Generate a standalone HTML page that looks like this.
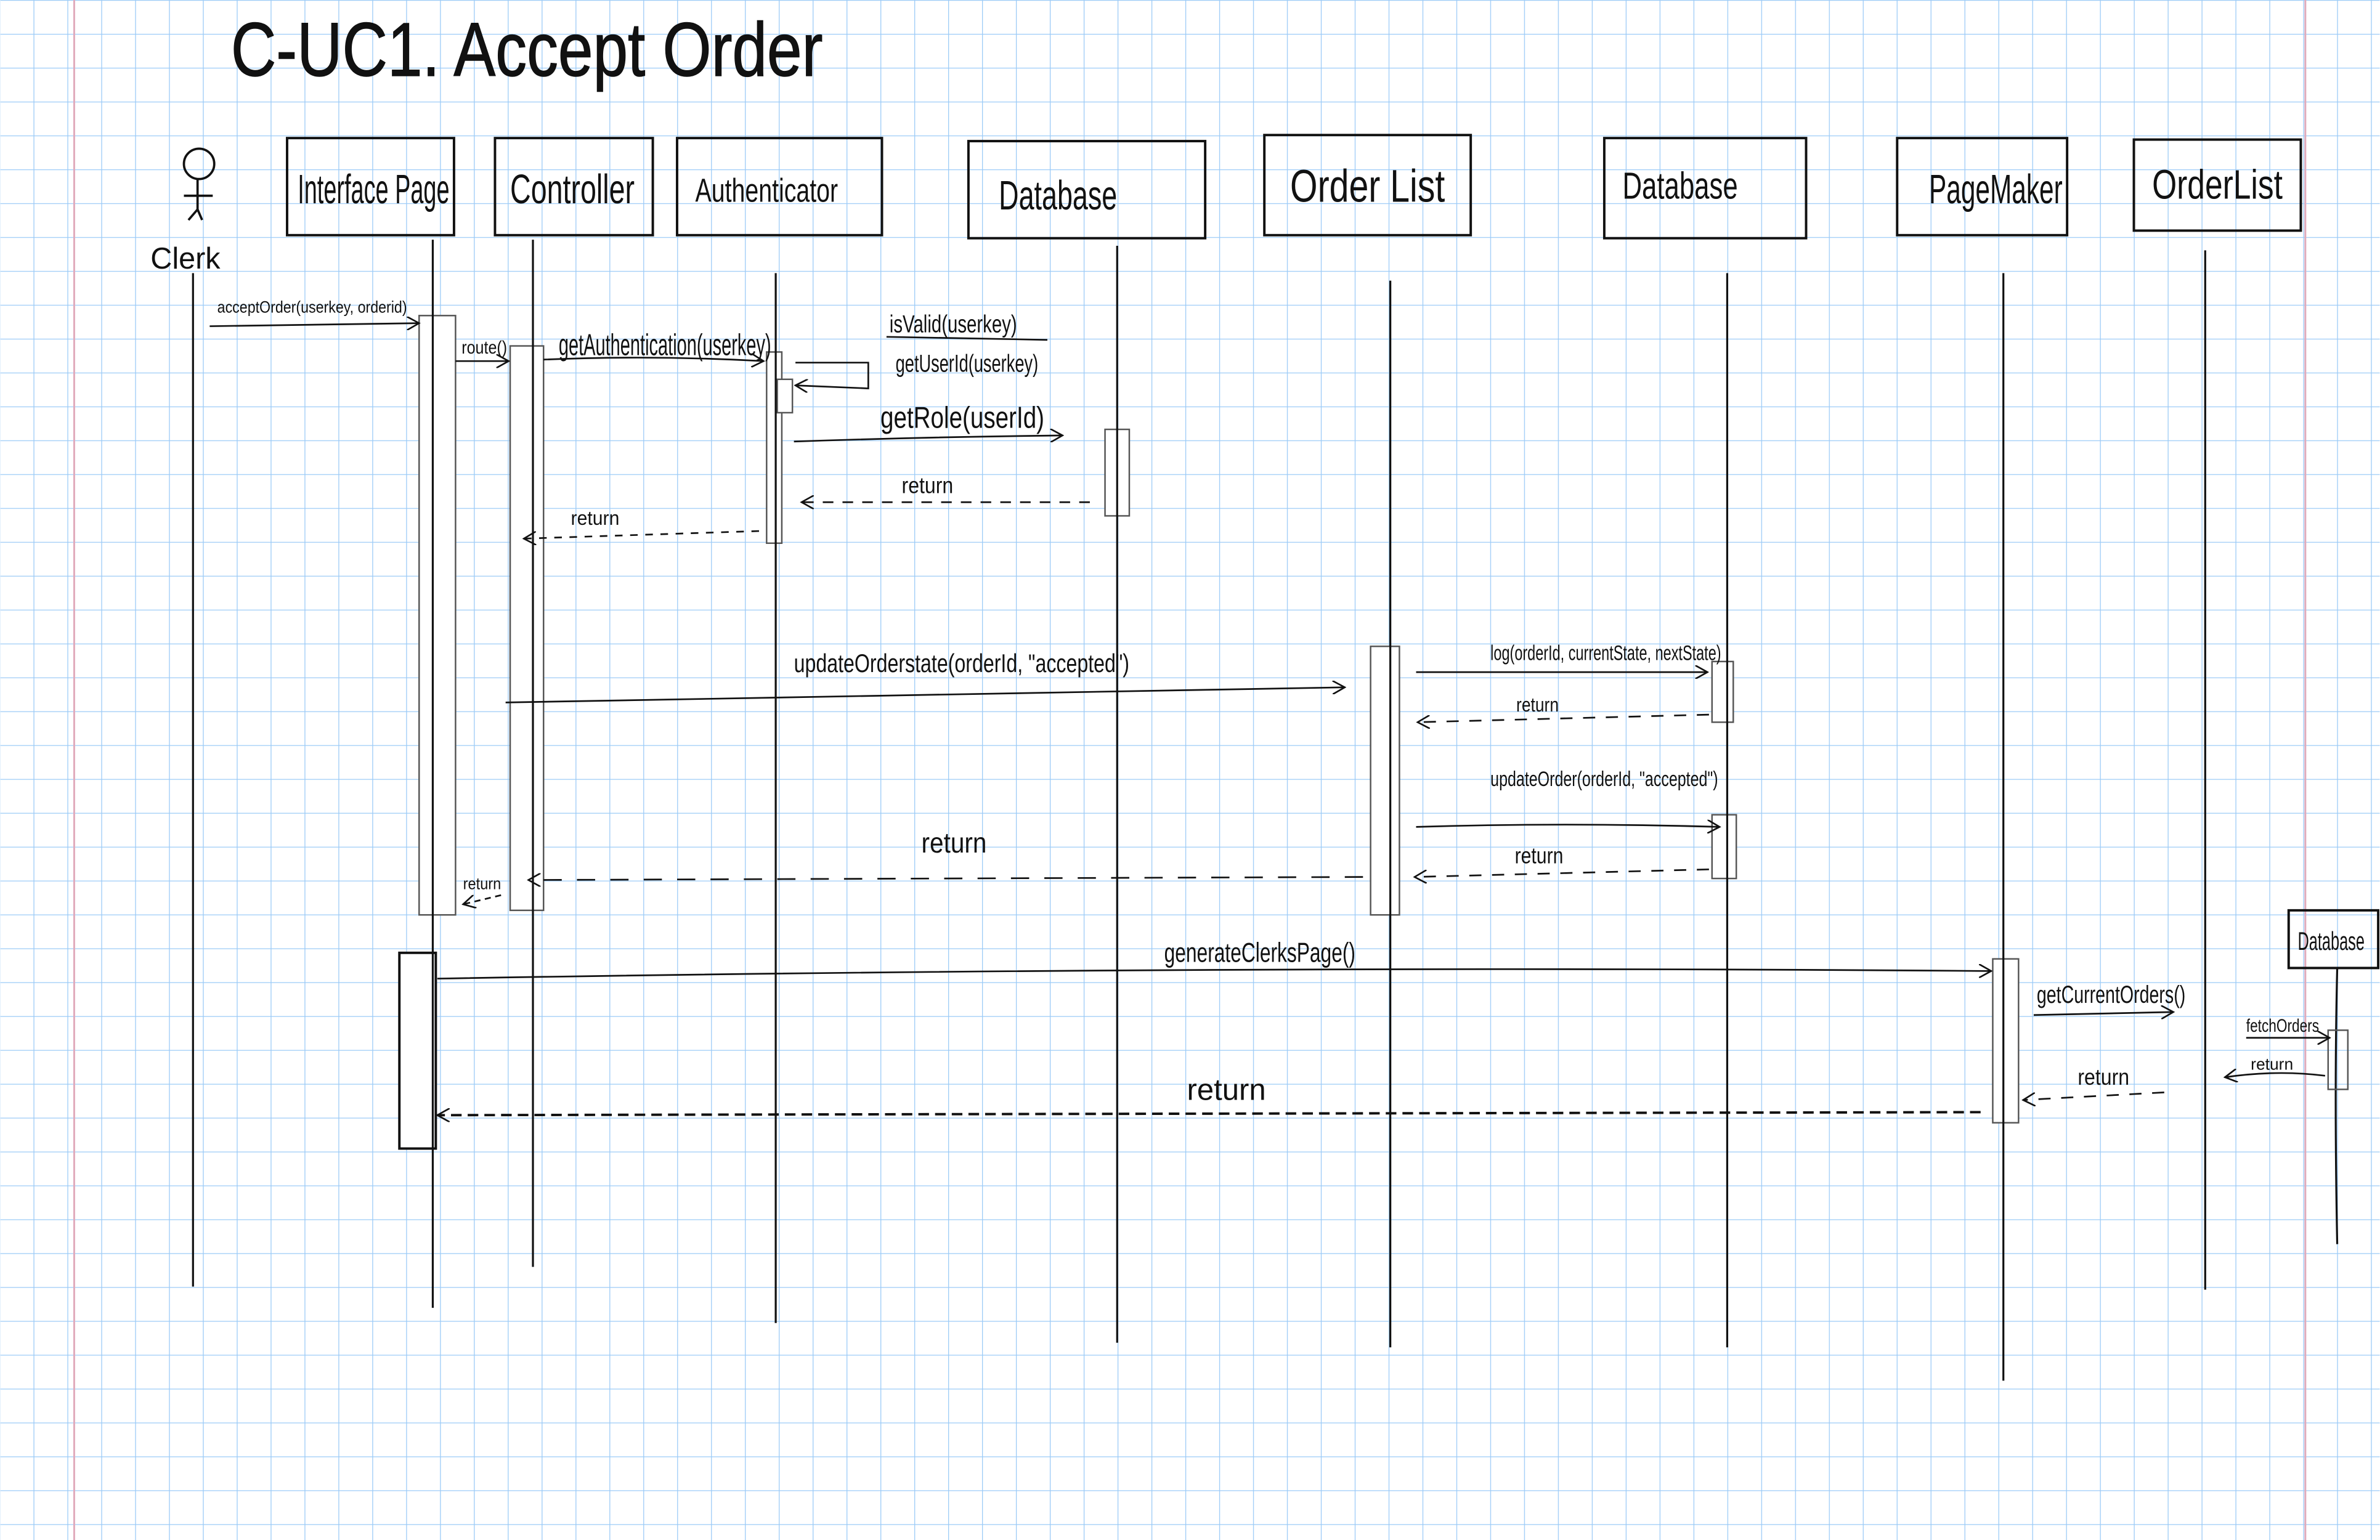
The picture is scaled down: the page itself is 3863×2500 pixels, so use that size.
<!DOCTYPE html>
<html><head><meta charset="utf-8"><style>
html,body{margin:0;padding:0;background:#fff;}
svg{display:block;}
text{font-family:"Liberation Sans Narrow","Liberation Sans",sans-serif;fill:#111;}
</style></head><body>
<svg width="3863" height="2500" viewBox="0 0 1568 1015" xmlns="http://www.w3.org/2000/svg">
<defs>
<pattern id="g" x="21.9" y="22.3" width="22.324" height="22.324" patternUnits="userSpaceOnUse">
<path d="M0 0H22.324M0 0V22.324" stroke="#9ccbf7" stroke-width="1.05" fill="none"/>
</pattern>
<marker id="a" viewBox="0 0 10 10" refX="9" refY="5" markerWidth="9" markerHeight="9" markerUnits="userSpaceOnUse" orient="auto"><path d="M0 0L9 5L0 10" fill="none" stroke="#111" stroke-width="1.2"/></marker>
</defs>
<rect width="1568" height="1015" fill="#fff"/>
<rect width="1568" height="1015" fill="url(#g)"/>
<line x1="48.7" y1="0" x2="48.7" y2="1015" stroke="#e0aabb" stroke-width="1.2"/>
<line x1="1519" y1="0" x2="1519" y2="1015" stroke="#e0aabb" stroke-width="1.2"/>

<text x="152" y="50" font-size="50" textLength="390" lengthAdjust="spacingAndGlyphs" stroke="#111" stroke-width="0.6">C-UC1. Accept Order</text>

<!-- actor -->
<g fill="none" stroke="#111" stroke-width="1.5">
<circle cx="131" cy="108" r="10"/>
<line x1="130" y1="118" x2="130" y2="138"/>
<line x1="121" y1="129" x2="140" y2="129"/>
<path d="M130 138L124 145M130 138L133 145"/>
</g>
<text x="99" y="177" font-size="20" textLength="46" lengthAdjust="spacingAndGlyphs">Clerk</text>

<!-- boxes -->
<g fill="none" stroke="#111" stroke-width="1.6">
<rect x="189" y="91" width="110" height="64"/>
<rect x="326" y="91" width="104" height="64"/>
<rect x="446" y="91" width="135" height="64"/>
<rect x="638" y="93" width="156" height="64"/>
<rect x="833" y="89" width="136" height="66"/>
<rect x="1057" y="91" width="133" height="66"/>
<rect x="1250" y="91" width="112" height="64"/>
<rect x="1406" y="92" width="110" height="60"/>
<rect x="1508" y="600" width="59" height="38"/>
</g>
<g font-size="27">
<text x="196" y="134" textLength="100" lengthAdjust="spacingAndGlyphs">Interface Page</text>
<text x="336" y="134" textLength="82" lengthAdjust="spacingAndGlyphs">Controller</text>
<text x="458" y="133" font-size="22" textLength="94" lengthAdjust="spacingAndGlyphs">Authenticator</text>
<text x="658" y="138" textLength="78" lengthAdjust="spacingAndGlyphs">Database</text>
<text x="850" y="133" font-size="30" textLength="102" lengthAdjust="spacingAndGlyphs">Order List</text>
<text x="1069" y="131" font-size="25" textLength="76" lengthAdjust="spacingAndGlyphs">Database</text>
<text x="1271" y="134" textLength="88" lengthAdjust="spacingAndGlyphs">PageMaker</text>
<text x="1418" y="131" textLength="86" lengthAdjust="spacingAndGlyphs">OrderList</text>
<text x="1514" y="626" font-size="17" textLength="44" lengthAdjust="spacingAndGlyphs">Database</text>
</g>

<!-- lifelines -->
<g stroke="#111" stroke-width="1.3">
<line x1="127" y1="180" x2="127" y2="848"/>
<line x1="1453" y1="165" x2="1453" y2="850"/>
<path d="M1540 638 Q1538 720 1540 820" fill="none"/>
</g>

<!-- activations -->
<g fill="#fff" stroke="#555" stroke-width="1">
<rect x="276" y="208" width="24" height="395"/>
<rect x="336" y="228" width="22" height="372"/>
<rect x="505" y="232" width="10" height="126"/>
<rect x="512" y="250" width="10" height="22"/>
<rect x="728" y="283" width="16" height="57"/>
<rect x="903" y="426" width="19" height="177"/>
<rect x="1128" y="436" width="14" height="40"/>
<rect x="1128" y="537" width="16" height="42"/>
<rect x="1313" y="632" width="17" height="108"/>
<rect x="1534" y="679" width="13" height="39" fill-opacity="0"/>
</g>
<rect x="263" y="628" width="24" height="129" fill="#fff" stroke="#111" stroke-width="1.6"/>
<g stroke="#111" stroke-width="1.3">
<line x1="285" y1="158" x2="285" y2="862"/>
<line x1="351" y1="158" x2="351" y2="835"/>
<line x1="511" y1="180" x2="511" y2="872"/>
<line x1="736" y1="162" x2="736" y2="885"/>
<line x1="916" y1="185" x2="916" y2="888"/>
<line x1="1138" y1="180" x2="1138" y2="888"/>
<line x1="1320" y1="180" x2="1320" y2="910"/>
</g>

<!-- messages -->
<g fill="none" stroke="#111" stroke-width="1.1" marker-end="url(#a)">
<path d="M138 215 L276 213"/>
<path d="M300 238 L335 238"/>
<path d="M358 237 Q430 234 503 238"/>
<path d="M524 239 L572 239 L572 256 L524 254"/>
<path d="M523 291 Q610 288 700 287"/>
<path d="M718 331 L528 331" stroke-dasharray="7 6"/>
<path d="M500 350 L345 355" stroke-dasharray="5 5"/>
<path d="M333 463 Q600 458 886 453"/>
<path d="M933 443 L1125 443"/>
<path d="M1126 471 L934 476" stroke-dasharray="8 7"/>
<path d="M933 545 Q1030 542 1133 545"/>
<path d="M1126 573 L932 578" stroke-dasharray="8 7"/>
<path d="M898 578 L348 580" stroke-dasharray="12 10"/>
<path d="M330 590 L305 596" stroke-dasharray="4 3"/>
<path d="M288 645 Q800 636 1312 640"/>
<path d="M1340 669 L1432 667"/>
<path d="M1426 720 L1333 725" stroke-dasharray="8 7"/>
<path d="M1480 684 L1535 684"/>
<path d="M1532 709 Q1500 705 1466 710"/>
<path d="M1305 733 L288 735" stroke-dasharray="7 4" stroke-width="1.6"/>
</g>
<line x1="584" y1="222" x2="690" y2="224" stroke="#111" stroke-width="1.1"/>

<!-- labels -->
<g font-size="13">
<text x="143" y="206" font-size="11" textLength="125" lengthAdjust="spacingAndGlyphs">acceptOrder(userkey, orderid)</text>
<text x="304" y="233" font-size="12" textLength="30" lengthAdjust="spacingAndGlyphs">route()</text>
<text x="368" y="234" font-size="20" textLength="140" lengthAdjust="spacingAndGlyphs">getAuthentication(userkey)</text>
<text x="586" y="219" font-size="16" textLength="84" lengthAdjust="spacingAndGlyphs">isValid(userkey)</text>
<text x="590" y="245" font-size="16" textLength="94" lengthAdjust="spacingAndGlyphs">getUserId(userkey)</text>
<text x="580" y="282" font-size="20" textLength="108" lengthAdjust="spacingAndGlyphs">getRole(userId)</text>
<text x="594" y="325" font-size="15" textLength="34" lengthAdjust="spacingAndGlyphs">return</text>
<text x="376" y="346" font-size="13" textLength="32" lengthAdjust="spacingAndGlyphs">return</text>
<text x="523" y="443" font-size="17" textLength="221" lengthAdjust="spacingAndGlyphs">updateOrderstate(orderId, "accepted")</text>
<text x="982" y="435" font-size="14" textLength="152" lengthAdjust="spacingAndGlyphs">log(orderId, currentState, nextState)</text>
<text x="999" y="469" font-size="13" textLength="28" lengthAdjust="spacingAndGlyphs">return</text>
<text x="982" y="518" font-size="14" textLength="150" lengthAdjust="spacingAndGlyphs">updateOrder(orderId, "accepted")</text>
<text x="998" y="569" font-size="15" textLength="32" lengthAdjust="spacingAndGlyphs">return</text>
<text x="607" y="562" font-size="19" textLength="43" lengthAdjust="spacingAndGlyphs">return</text>
<text x="305" y="586" font-size="11" textLength="25" lengthAdjust="spacingAndGlyphs">return</text>
<text x="767" y="634" font-size="18" textLength="126" lengthAdjust="spacingAndGlyphs">generateClerksPage()</text>
<text x="1342" y="661" font-size="16" textLength="98" lengthAdjust="spacingAndGlyphs">getCurrentOrders()</text>
<text x="1369" y="715" font-size="15" textLength="34" lengthAdjust="spacingAndGlyphs">return</text>
<text x="1480" y="680" font-size="12" textLength="48" lengthAdjust="spacingAndGlyphs">fetchOrders</text>
<text x="1483" y="705" font-size="11" textLength="28" lengthAdjust="spacingAndGlyphs">return</text>
<text x="782" y="725" font-size="20" textLength="52" lengthAdjust="spacingAndGlyphs">return</text>
</g>
</svg>
</body></html>
